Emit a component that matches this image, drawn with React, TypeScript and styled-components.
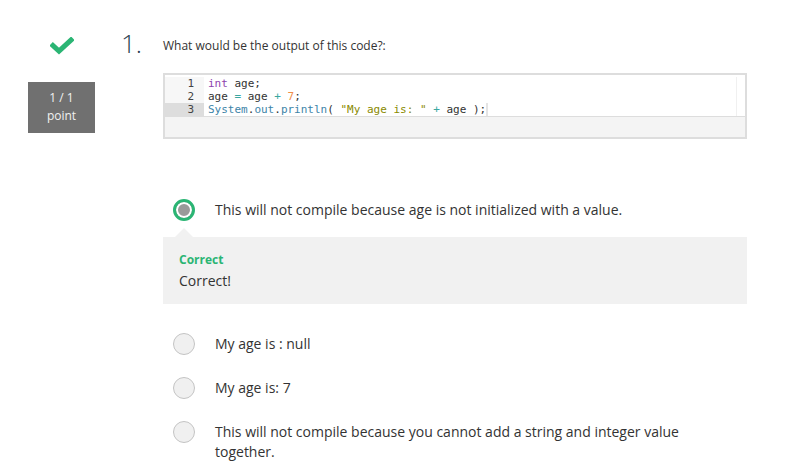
import * as React from 'react';
import styled, { createGlobalStyle } from 'styled-components';

const GlobalStyle = createGlobalStyle`
  html, body {
    margin: 0;
    padding: 0;
    background: #ffffff;
    font-family: "Open Sans", "Noto Sans", sans-serif;
    color: #333333;
  }
`;

const Page = styled.div`
  display: flex;
  padding: 28px 0 0 28px;
`;

const ScoreCol = styled.div`
  width: 67px;
  display: flex;
  flex-direction: column;
  align-items: center;
`;

const CheckIcon = styled.svg`
  width: 24px;
  height: 18px;
  margin-top: 9px;
`;

const ScoreBox = styled.div`
  margin-top: 27px;
  width: 67px;
  height: 51px;
  background: #707070;
  color: #f0f0f0;
  font-size: 12px;
  line-height: 18px;
  display: flex;
  flex-direction: column;
  align-items: center;
  justify-content: center;
  padding-bottom: 2px;
  box-sizing: border-box;
`;

const Question = styled.div`
  margin-left: 26px;
  display: flex;
`;

const Number = styled.div`
  width: 42px;
  font-size: 26px;
  font-weight: 300;
  line-height: 30px;
  color: #2c3e50;
`;

const Body = styled.div`
  width: 584px;
`;

const Prompt = styled.div`
  font-size: 12px;
  line-height: 20px;
  padding-top: 8px;
  color: #333;
`;

const CodeBox = styled.div`
  margin-top: 17px;
  border: 2px solid #dddddd;
  background: #f4f4f4;
`;

const Editor = styled.div`
  display: flex;
  background: #ffffff;
  padding-top: 2px;
  height: 39px;
  border-bottom: 1px solid #dddddd;
`;

const Gutter = styled.div`
  width: 39px;
  background: #f7f7f7;
  font-family: "DejaVu Sans Mono", "Liberation Mono", monospace;
  font-size: 11px;
  color: #444;
`;

const GutterLine = styled.div<{ $active?: boolean }>`
  height: 13px;
  line-height: 13px;
  text-align: right;
  padding-right: 10px;
  background: ${(p) => (p.$active ? '#dddddd' : 'transparent')};
`;

const Code = styled.div`
  flex: 1;
  padding-left: 4px;
  font-family: "DejaVu Sans Mono", "Liberation Mono", monospace;
  font-size: 11px;
  border-right: 1px solid #f0f0f0;
  margin-right: 8px;
`;

const CodeLine = styled.div`
  height: 13px;
  line-height: 13px;
  white-space: pre;
  color: #333;
`;

const ActiveLine = styled(CodeLine)`
  display: inline-block;
  border-right: 2px solid #e4e4e4;
`;

const Tok = styled.span<{ $c: string }>`
  color: ${(p) => p.$c};
`;

const CodeFooter = styled.div`
  height: 20px;
`;

const Options = styled.div`
  margin-top: 60px;
  display: flex;
  flex-direction: column;
`;

const OptionRow = styled.div`
  display: flex;
  align-items: flex-start;
  gap: 20px;
  padding: 1px 0 1px 10px;
  margin-bottom: 21px;
`;

const Radio = styled.span<{ $checked?: boolean }>`
  flex: none;
  box-sizing: border-box;
  width: 22px;
  height: 22px;
  border-radius: 50%;
  margin-top: -1px;
  ${(p) =>
    p.$checked
      ? `
    border: 3px solid #2bb574;
    background: #9a9a9a;
    box-shadow: inset 0 0 0 2px #ffffff;
  `
      : `
    border: 1px solid #c4c4c4;
    background: #f0f0f0;
  `}
`;

const OptionText = styled.div`
  font-size: 14px;
  line-height: 20px;
  color: #333;
  max-width: 480px;
`;

const Feedback = styled.div`
  position: relative;
  background: #f1f1f1;
  margin: -6px 0 29px;
  padding: 14px 16px 11px;

  &::before {
    content: '';
    position: absolute;
    top: -9px;
    left: 12px;
    border-left: 9px solid transparent;
    border-right: 9px solid transparent;
    border-bottom: 9px solid #f1f1f1;
  }
`;

const FeedbackTitle = styled.div`
  color: #2bb574;
  font-weight: 700;
  font-size: 12px;
  line-height: 18px;
`;

const FeedbackText = styled.div`
  font-size: 14px;
  line-height: 24px;
`;

export default function App() {
  return (
    <>
      <GlobalStyle />
      <Page>
        <ScoreCol>
          <CheckIcon viewBox="0 0 24 18">
            <polyline
              points="3,8.5 9,14 21,3"
              fill="none"
              stroke="#2bb574"
              strokeWidth="5"
              strokeLinecap="square"
            />
          </CheckIcon>
          <ScoreBox>
            <div>1 / 1</div>
            <div>point</div>
          </ScoreBox>
        </ScoreCol>
        <Question>
          <Number>1.</Number>
          <Body>
            <Prompt>What would be the output of this code?:</Prompt>
            <CodeBox>
              <Editor>
                <Gutter>
                  <GutterLine>1</GutterLine>
                  <GutterLine>2</GutterLine>
                  <GutterLine $active>3</GutterLine>
                </Gutter>
                <Code>
                  <CodeLine>
                    <Tok $c="#8e44ad">int</Tok> age;
                  </CodeLine>
                  <CodeLine>
                    age <Tok $c="#3aa7a0">=</Tok> age <Tok $c="#3aa7a0">+</Tok>{' '}
                    <Tok $c="#f08d49">7</Tok>;
                  </CodeLine>
                  <ActiveLine>
                    <Tok $c="#3d84a8">System</Tok>.<Tok $c="#3d84a8">out</Tok>.
                    <Tok $c="#3d84a8">println</Tok>( <Tok $c="#8a8a00">"My age is: "</Tok>{' '}
                    <Tok $c="#3aa7a0">+</Tok> age );
                  </ActiveLine>
                </Code>
              </Editor>
              <CodeFooter />
            </CodeBox>
            <Options>
              <OptionRow>
                <Radio $checked />
                <OptionText>
                  This will not compile because age is not initialized with a value.
                </OptionText>
              </OptionRow>
              <Feedback>
                <FeedbackTitle>Correct</FeedbackTitle>
                <FeedbackText>Correct!</FeedbackText>
              </Feedback>
              <OptionRow>
                <Radio />
                <OptionText>My age is : null</OptionText>
              </OptionRow>
              <OptionRow>
                <Radio />
                <OptionText>My age is: 7</OptionText>
              </OptionRow>
              <OptionRow>
                <Radio />
                <OptionText>
                  This will not compile because you cannot add a string and integer value
                  together.
                </OptionText>
              </OptionRow>
            </Options>
          </Body>
        </Question>
      </Page>
    </>
  );
}
